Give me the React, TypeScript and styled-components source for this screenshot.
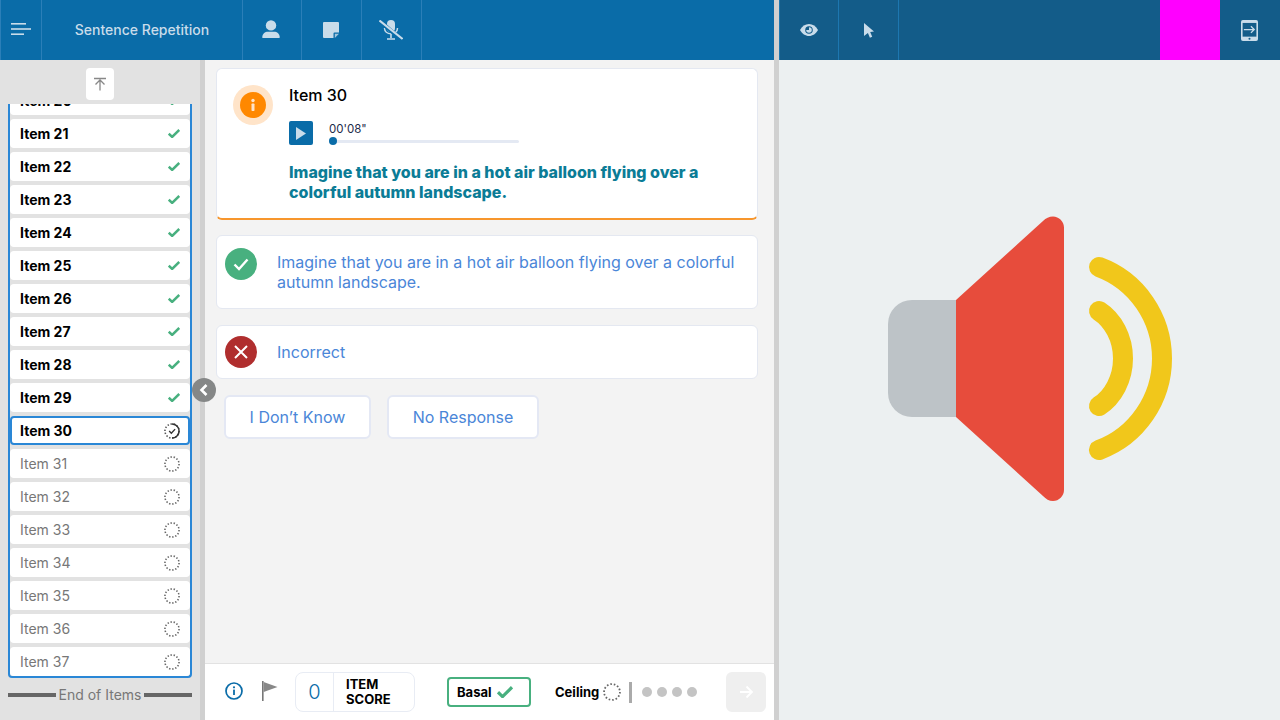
import React from 'react';
import styled, { createGlobalStyle } from 'styled-components';

const Global = createGlobalStyle`
  html, body { margin: 0; padding: 0; width: 1280px; height: 720px; overflow: hidden; }
  body { font-family: Inter, "Liberation Sans", sans-serif; }
  * { box-sizing: border-box; }
`;

const Page = styled.div`
  display: flex;
  width: 1280px;
  height: 720px;
  overflow: hidden;
`;
const LeftPane = styled.div`
  width: 774px;
  display: flex;
  flex-direction: column;
`;
const PaneDivider = styled.div`
  width: 5px;
  background: #d0d0d0;
`;
const RightPane = styled.div`
  flex: 1;
  display: flex;
  flex-direction: column;
  background: #ecf0f1;
`;
const Bar = styled.header<{ $bg: string }>`
  height: 60px;
  flex: none;
  display: flex;
  background: ${p => p.$bg};
`;
const BarCell = styled.div<{ $w: number; $line?: string; $start?: boolean; $pr?: number; $pb?: number }>`
  width: ${p => p.$w}px;
  flex: none;
  display: flex;
  align-items: center;
  justify-content: center;
  padding-right: ${p => p.$pr || 0}px;
  padding-bottom: ${p => p.$pb || 0}px;
  border-right: 1px solid ${p => p.$line || '#2b7fb8'};
  ${p => (p.$start ? `border-left: 1px solid ${p.$line || '#2b7fb8'};` : '')}
`;
const Title = styled.span`
  font-size: 14px;
  font-weight: 500;
  color: #c9dcea;
  white-space: nowrap;
`;
const BarSpacer = styled.div`
  flex: 1;
`;
const Magenta = styled.div`
  width: 60px;
  background: #ff00ff;
`;
const TabletCell = styled.div`
  width: 60px;
  padding-right: 1px;
  display: flex;
  align-items: center;
  justify-content: center;
`;
const Body = styled.div`
  flex: 1;
  display: flex;
  min-height: 0;
  position: relative;
`;
const Sidebar = styled.aside`
  width: 200px;
  flex: none;
  background: #e2e2e2;
  display: flex;
  flex-direction: column;
  align-items: center;
  padding-top: 8px;
`;
const TopButton = styled.button`
  width: 28px;
  height: 32px;
  padding: 0;
  border: 0;
  border-radius: 4px;
  background: #fff;
  display: flex;
  align-items: center;
  justify-content: center;
  margin-bottom: 4px;
`;
const ItemList = styled.div`
  width: 184px;
  height: 574px;
  flex: none;
  overflow: hidden;
  border: 2px solid #2a87d6;
  border-top: 0;
  border-radius: 0 0 4px 4px;
  display: flex;
  flex-direction: column;
  gap: 4px;
  background: #e2e2e2;
`;
const ItemRow = styled.div<{ $done?: boolean; $current?: boolean; $first?: boolean }>`
  height: 29px;
  flex: none;
  background: #fff;
  border-radius: 4px;
  display: flex;
  align-items: center;
  justify-content: space-between;
  font-size: 14px;
  line-height: 17px;
  padding: 0 10px;
  color: ${p => (p.$done || p.$current ? '#000' : '#777')};
  font-weight: ${p => (p.$done || p.$current ? 700 : 400)};
  ${p => (p.$first ? 'margin-top: -18px;' : '')}
  ${p => (p.$current ? 'border: 2px solid #2a87d6; padding: 0 8px;' : '')}
`;
const EndRow = styled.div`
  width: 184px;
  margin-top: 8px;
  display: flex;
  align-items: center;
  gap: 3px;
  font-size: 14px;
  line-height: 17px;
  color: #777;
  white-space: nowrap;
`;
const EndLine = styled.span`
  flex: 1;
  height: 4px;
  background: #666;
`;
const SideRule = styled.div`
  width: 5px;
  flex: none;
  background: #d0d0d0;
`;
const Handle = styled.button`
  position: absolute;
  left: 192px;
  top: 318px;
  width: 24px;
  height: 24px;
  padding: 0;
  border: 0;
  border-radius: 50%;
  background: #858787;
  display: flex;
  align-items: center;
  justify-content: center;
`;
const Content = styled.main`
  flex: 1;
  min-width: 0;
  display: flex;
  flex-direction: column;
  background: #f3f3f3;
`;
const Scroll = styled.div`
  flex: 1;
  padding: 8px 16px 0 11px;
  display: flex;
  flex-direction: column;
`;
const Card = styled.section<{ $h: number; $mb: number; $accent?: boolean }>`
  height: ${p => p.$h}px;
  margin-bottom: ${p => p.$mb}px;
  flex: none;
  background: #fff;
  border: 1px solid #e4e8f1;
  border-radius: 6px;
  display: flex;
  ${p => (p.$accent ? 'border-bottom: 2px solid #f7962d;' : '')}
`;
const Halo = styled.div`
  width: 40px;
  height: 40px;
  flex: none;
  margin: 16px 16px 0 16px;
  border-radius: 50%;
  background: #ffe4c9;
  display: flex;
  align-items: center;
  justify-content: center;
`;
const Prompt = styled.div`
  flex: 1;
  display: flex;
  flex-direction: column;
  padding-top: 16px;
`;
const ItemTitle = styled.div`
  font-size: 16px;
  line-height: 20px;
  font-weight: 500;
  color: #000;
`;
const Player = styled.div`
  display: flex;
  gap: 16px;
  margin-top: 16px;
  height: 24px;
`;
const PlayButton = styled.div`
  width: 24px;
  height: 24px;
  border-radius: 2px;
  background: #0a6ca8;
  display: flex;
  align-items: center;
  justify-content: center;
`;
const Timeline = styled.div`
  width: 190px;
  display: flex;
  flex-direction: column;
`;
const Time = styled.div`
  font-size: 11.5px;
  line-height: 16px;
  color: #1c2b4a;
`;
const Track = styled.div`
  height: 3px;
  margin-top: 3px;
  background: #e4e9f3;
  border-radius: 2px;
  position: relative;
`;
const Thumb = styled.span`
  position: absolute;
  left: 0;
  top: -3px;
  width: 8px;
  height: 8px;
  border-radius: 50%;
  background: #0a6ca8;
`;
const PromptText = styled.p`
  margin: 17px 0 0;
  width: 440px;
  font-size: 16px;
  line-height: 20px;
  font-weight: 800;
  color: #0b7c96;
`;
const Choice = styled(Card)`
  align-items: center;
  padding: 0 20px 0 8px;
  gap: 20px;
  font-size: 16px;
  line-height: 20px;
  color: #4a86d8;
`;
const ChoiceIcon = styled.div<{ $bg: string; $up?: number }>`
  width: 32px;
  height: 32px;
  flex: none;
  border-radius: 50%;
  background: ${p => p.$bg};
  display: flex;
  align-items: center;
  justify-content: center;
  margin-top: ${p => p.$up || 0}px;
`;
const ChoiceText = styled.span`
  display: block;
  margin-top: -1px;
`;
const Buttons = styled.div`
  display: flex;
  gap: 16px;
  padding-left: 8px;
`;
const GhostButton = styled.button<{ $w: number }>`
  width: ${p => p.$w}px;
  height: 44px;
  background: #fff;
  border: 2px solid #e4e8f4;
  border-radius: 6px;
  font-family: inherit;
  font-size: 16px;
  color: #4a86d8;
  padding: 0;
`;
const Footer = styled.footer`
  height: 57px;
  flex: none;
  background: #fff;
  border-top: 1px solid #e2e2e2;
  display: flex;
  align-items: center;
  position: relative;
  padding-left: 19px;
`;
const FootIcon = styled.div<{ $w: number }>`
  width: ${p => p.$w}px;
  flex: none;
  display: flex;
  align-items: center;
  margin-top: -2px;
`;
const ScoreBox = styled.div`
  width: 120px;
  height: 40px;
  flex: none;
  margin-top: -1px;
  border: 1px solid #e8ecf4;
  border-radius: 8px;
  display: flex;
`;
const ScoreValue = styled.div`
  width: 38px;
  flex: none;
  border-right: 1px solid #e8ecf4;
  display: flex;
  align-items: center;
  justify-content: center;
  font-size: 20px;
  font-weight: 300;
  color: #0a6ca8;
`;
const ScoreLabel = styled.div`
  padding: 4px 0 0 12px;
  font-size: 13px;
  line-height: 15.5px;
  font-weight: 700;
  color: #000;
`;
const Basal = styled.div`
  width: 84px;
  height: 30px;
  flex: none;
  margin: 0 24px 0 32px;
  border: 2px solid #48b07f;
  border-radius: 4px;
  display: flex;
  align-items: center;
  gap: 5px;
  padding-left: 8px;
  font-size: 13px;
  font-weight: 700;
  color: #000;
`;
const Ceiling = styled.div`
  display: flex;
  align-items: center;
  gap: 4px;
  font-size: 13px;
  font-weight: 700;
  color: #000;
  margin-top: -1px;
`;
const VRule = styled.span`
  width: 3px;
  height: 21px;
  background: #aaa;
  margin: 0 10px 0 8px;
  flex: none;
`;
const Dots = styled.div`
  display: flex;
  gap: 5px;
`;
const Dot = styled.span`
  width: 10px;
  height: 10px;
  border-radius: 50%;
  background: #c4c4c4;
`;
const NextButton = styled.button`
  width: 40px;
  height: 40px;
  padding: 0;
  border: 0;
  border-radius: 6px;
  background: #efefef;
  margin-left: auto;
  margin-right: 8px;
  margin-top: -1px;
  display: flex;
  align-items: center;
  justify-content: center;
`;
const SpeakerWrap = styled.div`
  flex: 1;
  padding: 148px 0 0 101px;
`;

const ICON = '#c9dcea';

const MenuIcon = () => (
  <svg width="20" height="14" viewBox="0 0 20 14">
    <g fill={ICON}>
      <rect x="0" y="0" width="15" height="1.6" />
      <rect x="0" y="5.2" width="20" height="1.6" />
      <rect x="0" y="10.4" width="13" height="1.6" />
    </g>
  </svg>
);
const UserIcon = () => (
  <svg width="18" height="18" viewBox="0 0 20 20">
    <circle cx="10" cy="6" r="5.800" fill={ICON} />
    <path d="M1 20c-.4 0-.8-.3-.8-.8C.6 15 3.400 13 6.500 13h7c3.100 0 5.900 2 6.300 6.200 0 .5-.4.800-.8.800z" fill={ICON} />
  </svg>
);
const NoteIcon = () => (
  <svg width="16" height="16" viewBox="0 0 16 16">
    <path d="M1 0h14a1 1 0 0 1 1 1v9.500h-4.500a1 1 0 0 0-1 1V16H1a1 1 0 0 1-1-1V1a1 1 0 0 1 1-1z" fill={ICON} />
    <path d="M11.800 16v-4.200H16z" fill={ICON} opacity=".8" />
  </svg>
);
const MicOffIcon = () => (
  <svg width="24" height="20" viewBox="0 0 24 20">
    <rect x="8" y="0" width="8" height="12" rx="4" fill={ICON} />
    <path d="M5.500 8c0 3.600 2.800 5.800 6.500 5.800S18.500 11.600 18.500 8" fill="none" stroke={ICON} strokeWidth="1.500" />
    <path d="M12 14v4M8 19h8" stroke={ICON} strokeWidth="1.600" />
    <path d="M1.500 1.500 23 20.500" stroke="#0a6ca8" strokeWidth="4" />
    <path d="M.5 .5 23.500 19" stroke={ICON} strokeWidth="2" />
  </svg>
);
const EyeIcon = () => (
  <svg width="18" height="12" viewBox="0 0 18 12">
    <path d="M0 6C2 2.300 5.300 0 9 0s7 2.300 9 6c-2 3.700-5.300 6-9 6S2 9.700 0 6z" fill={ICON} />
    <circle cx="9" cy="6" r="3.800" fill="#135c89" />
    <path d="M9 3.200a2.800 2.800 0 1 1-2.800 2.800H9z" fill={ICON} />
  </svg>
);
const CursorIcon = () => (
  <svg width="10" height="15" viewBox="0 0 10 15">
    <path d="M0 0 10 8.600 6.200 9l2 4.700-2.300 1-2-4.800L0 13z" fill={ICON} />
  </svg>
);
const TabletIcon = () => (
  <svg width="17" height="21" viewBox="0 0 18 22">
    <rect x="0" y="0" width="18" height="22" rx="2" fill={ICON} />
    <rect x="1.700" y="3" width="14.600" height="14.500" fill="#135c89" />
    <circle cx="9" cy="19.700" r="1.100" fill="#135c89" />
    <path d="M3 10h11M10.500 6.500 14 10l-3.500 3.500" fill="none" stroke={ICON} strokeWidth="1.400" />
  </svg>
);
const TopIcon = () => (
  <svg width="14" height="14" viewBox="0 0 14 14" fill="none" stroke="#888" strokeWidth="1.300">
    <path d="M1 1.500h12M7 13.500V3M2.500 7.500 7 3l4.500 4.500" />
  </svg>
);
const Check = ({ w = 12, c = '#48b07f', sw = 2.7 }: { w?: number; c?: string; sw?: number }) => (
  <svg width={w} height={w * 0.77} viewBox="0 0 13 10" fill="none" stroke={c} strokeWidth={sw}>
    <path d="M.8 5 4.500 8.600 12.200 1" />
  </svg>
);
const Dashed = ({ size = 16 }: { size?: number }) => (
  <svg width={size} height={size} viewBox="0 0 17 17" fill="none">
    <circle cx="8.500" cy="8.500" r="7.500" stroke="#666" strokeWidth="1.700" strokeDasharray="1.500 1.850" />
  </svg>
);
const Progress = () => (
  <svg width="16" height="16" viewBox="0 0 17 17" fill="none">
    <circle cx="8.500" cy="8.500" r="7.500" stroke="#555" strokeWidth="1.700" strokeDasharray="1.500 1.850" />
    <path d="M8.500 1a7.500 7.500 0 0 1 0 15" stroke="#333" strokeWidth="1.600" />
    <path d="M5.500 8.500 7.800 10.800 11.800 6.500" stroke="#333" strokeWidth="1.500" />
  </svg>
);
const Speaker = () => (
  <svg width="300" height="300" viewBox="880 208 300 300">
    <path d="M956 300h-44a24 24 0 0 0-24 24v69a24 24 0 0 0 24 24h44z" fill="#bdc3c7" />
    <path d="M956 300 1043 221c3-3 6-4.500 10-4.500 6 0 11 5 11 11V490c0 6-5 11-11 11-4 0-7-2-10-5L956 417z" fill="#e74c3c" />
    <path d="M1099 267C1137 281 1162 318 1162 358.500S1137 436 1099 450" fill="none" stroke="#f1c71b" strokeWidth="20" strokeLinecap="round" />
    <path d="M1099 311C1113 320 1123 338 1123 358.500S1113 397 1099 406" fill="none" stroke="#f1c71b" strokeWidth="20" strokeLinecap="round" />
  </svg>
);

const items = Array.from({ length: 18 }, (_, i) => 20 + i);

export default function App() {
  return (
    <Page>
      <Global />
      <LeftPane>
        <Bar $bg="#0a6ca8">
          <BarCell $w={42} $start><MenuIcon /></BarCell>
          <BarCell $w={201} $pb={2}><Title>Sentence Repetition</Title></BarCell>
          <BarCell $w={59} $pr={2} $pb={2}><UserIcon /></BarCell>
          <BarCell $w={60} $pr={1}><NoteIcon /></BarCell>
          <BarCell $w={60} $pr={1}><MicOffIcon /></BarCell>
        </Bar>
        <Body>
          <Sidebar>
            <TopButton aria-label="Top"><TopIcon /></TopButton>
            <ItemList>
              {items.map(n => {
                const done = n < 30;
                const current = n === 30;
                return (
                  <ItemRow key={n} $done={done} $current={current} $first={n === 20}>
                    <span>Item {n}</span>
                    {done ? <Check /> : current ? <Progress /> : <Dashed />}
                  </ItemRow>
                );
              })}
            </ItemList>
            <EndRow><EndLine />End of Items<EndLine /></EndRow>
          </Sidebar>
          <SideRule />
          <Handle aria-label="Collapse">
            <svg width="10" height="12" viewBox="0 0 10 12" fill="none" stroke="#fff" strokeWidth="2.600">
              <path d="M7.500 1 2.500 6l5 5" />
            </svg>
          </Handle>
          <Content>
            <Scroll>
              <Card $h={152} $mb={15} $accent>
                <Halo>
                  <svg width="26" height="26" viewBox="0 0 26 26">
                    <circle cx="13" cy="13" r="13" fill="#ff8800" />
                    <circle cx="13" cy="8.500" r="1.700" fill="#ffe4c9" />
                    <rect x="11.500" y="11.500" width="3" height="7.500" rx=".8" fill="#ffe4c9" />
                  </svg>
                </Halo>
                <Prompt>
                  <ItemTitle>Item 30</ItemTitle>
                  <Player>
                    <PlayButton>
                      <svg width="10" height="13" viewBox="0 0 10 13"><path d="M0 0 10 6.500 0 13z" fill="#c9dcea" /></svg>
                    </PlayButton>
                    <Timeline>
                      <Time>00'08"</Time>
                      <Track><Thumb /></Track>
                    </Timeline>
                  </Player>
                  <PromptText>Imagine that you are in a hot air balloon flying over a colorful autumn landscape.</PromptText>
                </Prompt>
              </Card>
              <Choice $h={74} $mb={16}>
                <ChoiceIcon $bg="#48b07f" $up={-16}>
                  <svg width="16" height="13" viewBox="0 0 16 13" fill="none" stroke="#fff" strokeWidth="2.400"><path d="M1.500 6.500 6 11 14.500 1.500" /></svg>
                </ChoiceIcon>
                <ChoiceText>Imagine that you are in a hot air balloon flying over a colorful autumn landscape.</ChoiceText>
              </Choice>
              <Choice $h={54} $mb={16}>
                <ChoiceIcon $bg="#b02e2e">
                  <svg width="14" height="14" viewBox="0 0 14 14" fill="none" stroke="#fff" strokeWidth="2"><path d="M1 1 13 13M13 1 1 13" /></svg>
                </ChoiceIcon>
                <ChoiceText>Incorrect</ChoiceText>
              </Choice>
              <Buttons>
                <GhostButton $w={147}>I Don’t Know</GhostButton>
                <GhostButton $w={152}>No Response</GhostButton>
              </Buttons>
            </Scroll>
            <Footer>
              <FootIcon $w={38}>
                <svg width="20" height="20" viewBox="0 0 20 20" fill="none">
                  <circle cx="10" cy="10" r="8" stroke="#0a6ca8" strokeWidth="1.700" />
                  <circle cx="10" cy="6.300" r="1.100" fill="#0a6ca8" />
                  <rect x="9.100" y="8.600" width="1.800" height="5.400" fill="#0a6ca8" />
                </svg>
              </FootIcon>
              <FootIcon $w={33}>
                <svg width="16" height="20" viewBox="0 0 16 20">
                  <rect x="0" y="0" width="1.600" height="20" fill="#777" />
                  <path d="M1.600 1 15.500 6 1.600 11z" fill="#888" />
                </svg>
              </FootIcon>
              <ScoreBox>
                <ScoreValue>0</ScoreValue>
                <ScoreLabel>ITEM<br />SCORE</ScoreLabel>
              </ScoreBox>
              <Basal>Basal <Check w={16} sw={2.600} /></Basal>
              <Ceiling>Ceiling <Dashed size={18} /></Ceiling>
              <VRule />
              <Dots><Dot /><Dot /><Dot /><Dot /></Dots>
              <NextButton aria-label="Next">
                <svg width="14" height="14" viewBox="0 0 14 14" fill="none" stroke="#fff" strokeWidth="1.800"><path d="M1 7h12M7.500 1.500 13 7l-5.500 5.500" /></svg>
              </NextButton>
            </Footer>
          </Content>
        </Body>
      </LeftPane>
      <PaneDivider />
      <RightPane>
        <Bar $bg="#135c89">
          <BarCell $w={60} $line="#1d77b0" $start><EyeIcon /></BarCell>
          <BarCell $w={60} $line="#1d77b0"><CursorIcon /></BarCell>
          <BarSpacer />
          <Magenta />
          <TabletCell><TabletIcon /></TabletCell>
        </Bar>
        <SpeakerWrap><Speaker /></SpeakerWrap>
      </RightPane>
    </Page>
  );
}
